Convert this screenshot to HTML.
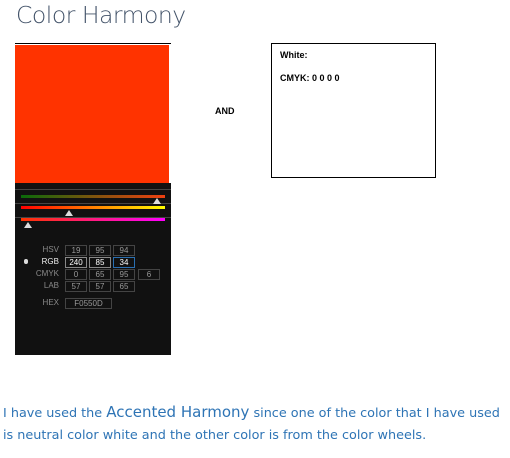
<!DOCTYPE html>
<html><head><style>
body{margin:0;width:510px;height:458px;background:#fff;position:relative;overflow:hidden;font-family:"Liberation Sans",sans-serif}
.a{position:absolute}
.t{left:16px;top:1px;font-size:23.5px;color:#44546a;font-family:"DejaVu Sans","Liberation Sans",sans-serif;font-weight:200;letter-spacing:-0.5px}
.lbl{color:#8a8a8a;font-size:8px;text-align:right;width:40px;left:19px}
.bx{border:1px solid #444;color:#999;font-size:8px;text-align:center;height:9px;line-height:9px;width:20px}
.tri{width:0;height:0;border-left:4px solid transparent;border-right:4px solid transparent;border-bottom:6px solid #ddd}
.p{font-size:12.8px;color:#2e74b5;left:3px;font-family:"DejaVu Sans",sans-serif}
</style></head><body>
<div class="a t">Color Harmony</div>
<div class="a" style="left:15px;top:43px;width:156px;height:1px;background:#000"></div>
<div class="a" style="left:15px;top:45px;width:154px;height:138px;background:#ff3300"></div>
<div class="a" style="left:15px;top:183px;width:156px;height:172px;background:#111"></div>
<div class="a" style="left:15px;top:189px;width:156px;height:1px;background:#444"></div>
<div class="a" style="left:15px;top:203px;width:156px;height:1px;background:#444"></div>
<div class="a" style="left:15px;top:217px;width:156px;height:1px;background:#444"></div>
<div class="a" style="left:21px;top:195px;width:144px;height:3px;background:linear-gradient(90deg,#0a6a0a,#f04010)"></div>
<div class="a" style="left:21px;top:206px;width:144px;height:3px;background:linear-gradient(90deg,#ff0000,#ffff00)"></div>
<div class="a" style="left:21px;top:218px;width:144px;height:3px;background:linear-gradient(90deg,#ff3300,#ff00ff)"></div>
<div class="a tri" style="left:153px;top:198px"></div>
<div class="a tri" style="left:65px;top:210px"></div>
<div class="a tri" style="left:24px;top:222px"></div>
<div class="a lbl" style="top:245px">HSV</div>
<div class="a lbl" style="top:257px;color:#eee">RGB</div>
<div class="a lbl" style="top:269px">CMYK</div>
<div class="a lbl" style="top:281px">LAB</div>
<div class="a lbl" style="top:298px">HEX</div>
<div class="a" style="left:24px;top:259px;width:4px;height:5px;background:#ddd;border-radius:2px"></div>
<div class="a bx" style="left:65px;top:245px">19</div><div class="a bx" style="left:89px;top:245px">95</div><div class="a bx" style="left:113px;top:245px">94</div>
<div class="a bx" style="left:65px;top:257px;color:#fff;border-color:#888">240</div><div class="a bx" style="left:89px;top:257px;color:#fff;border-color:#888">85</div><div class="a bx" style="left:113px;top:257px;color:#fff;border-color:#2a6fb0">34</div>
<div class="a bx" style="left:65px;top:269px">0</div><div class="a bx" style="left:89px;top:269px">65</div><div class="a bx" style="left:113px;top:269px">95</div><div class="a bx" style="left:138px;top:269px">6</div>
<div class="a bx" style="left:65px;top:281px">57</div><div class="a bx" style="left:89px;top:281px">57</div><div class="a bx" style="left:113px;top:281px">65</div>
<div class="a bx" style="left:65px;top:298px;width:45px">F0550D</div>
<div class="a" style="left:215px;top:106px;font-size:9px;font-weight:bold">AND</div>
<div class="a" style="left:271px;top:43px;width:163px;height:133px;border:1px solid #000"></div>
<div class="a" style="left:280px;top:50px;font-size:9px;font-weight:bold">White:</div>
<div class="a" style="left:280px;top:73px;font-size:9px;font-weight:bold">CMYK: 0 0 0 0</div>
<div class="a p" style="top:403px;white-space:nowrap">I have used the <span style="font-size:15px">Accented Harmony</span> since one of the color that I have used</div>
<div class="a p" style="top:428px;white-space:nowrap">is neutral color white and the other color is from the color wheels.</div>
</body></html>
